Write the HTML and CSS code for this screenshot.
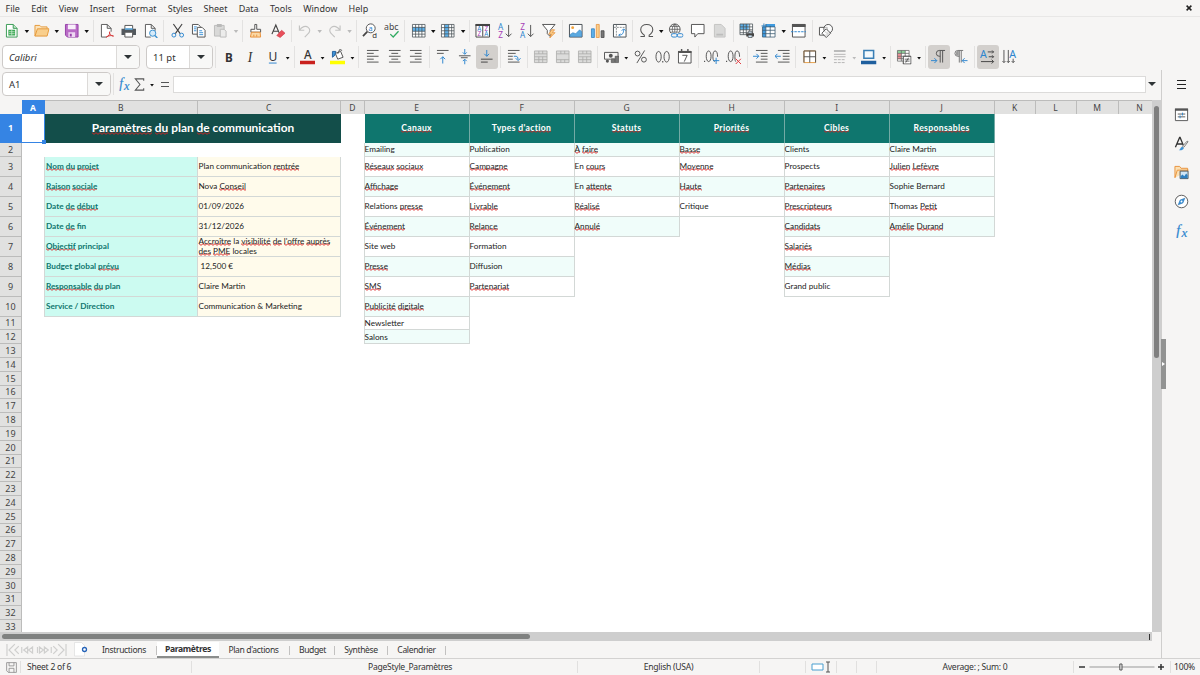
FILE: index.html
```html
<!DOCTYPE html>
<html lang="fr">
<head>
  <meta charset="UTF-8" />
  <title>Plan de communication</title>
  <link rel="stylesheet" href="styles.css">
</head>
<body>

<svg class="defs" aria-hidden="true">
  <!-- standard toolbar -->
  <symbol id="new" viewBox="0 0 16 16"><path d="M2.500 1.500h7l4 4v9h-11z" fill="#fff" stroke="#3a9b55"/><path d="M9.500 1.500v4h4" fill="#bfe5c7" stroke="#3a9b55"/><path d="M4.500 7h7v6h-7z" fill="#39a852"/><path d="M5 9h6M5 11h6M8 7v6" stroke="#d8f0dc" stroke-width=".7"/></symbol>
  <symbol id="open" viewBox="0 0 16 16"><path d="M1 13.500V2.500h5l1.500 1.500h6v2" fill="#fbe3bb" stroke="#e59a3b"/><path d="M1 13.500l2.500-7.500h12l-2 7.500z" fill="#f9cf8d" stroke="#e59a3b"/></symbol>
  <symbol id="save" viewBox="0 0 16 16"><path d="M1.500 1.500h13v13h-11l-2-2z" fill="#b96bc6" stroke="#9640a8"/><path d="M4 1.500h8v5H4z" fill="#f8effa"/><path d="M4.500 9.500h7v5h-7z" fill="#eed7f2"/><path d="M6 11h2v3H6z" fill="#9640a8"/></symbol>
  <symbol id="pdf" viewBox="0 0 16 16"><path d="M8 14.500H2.500v-13h6l4 4V9M8.500 1.500v4h4" fill="#fff" stroke="#5c5c5c"/><path d="M7.500 14.500c3-1 4-4 3.500-5.500-1 2 2 4.500 4 4.500-2-1-5-.5-7.500 1z" fill="none" stroke="#d63a3a"/></symbol>
  <symbol id="print" viewBox="0 0 16 16"><path d="M4 2.500h8v4H4z" fill="#fff" stroke="#555"/><path d="M.5 6h15v6.500H.5z" fill="#52585d"/><path d="M4 9.500h8v5H4z" fill="#fff" stroke="#555"/><path d="M4 5.500h8v1.500H4z" fill="#5fb0e8"/></symbol>
  <symbol id="preview" viewBox="0 0 16 16"><path d="M8 14.500H2.500v-13h6l4 4V8M8.500 1.500v4h4" fill="#fff" stroke="#5c5c5c"/><circle cx="10" cy="10.500" r="3.200" fill="#d6ebfa" stroke="#3a8fce"/><path d="M12.300 13l2.500 2.500" stroke="#3a8fce" stroke-width="1.400"/></symbol>
  <symbol id="cut" viewBox="0 0 16 16"><path d="M3.500 1l7 10M12.500 1l-7 10" stroke="#444" stroke-width="1.200"/><circle cx="4" cy="12.500" r="2" fill="none" stroke="#2e86cf"/><circle cx="12" cy="12.500" r="2" fill="none" stroke="#2e86cf"/></symbol>
  <symbol id="copy" viewBox="0 0 16 16"><path d="M1.500 1.500h6l2 2v8h-8z" fill="#fff" stroke="#555"/><path d="M6.500 4.500h5l3 3v7h-8z" fill="#fff" stroke="#555"/><path d="M3 4h3M3 6h2.500M3 8h2.500M8.500 8h3M8.500 10h4M8.500 12h4" stroke="#3f93d6"/></symbol>
  <symbol id="paste" viewBox="0 0 16 16"><path d="M1.500 2.500h10v11h-10z" fill="#d9d9d8" stroke="#bcbcbb"/><path d="M4 1h5v3H4z" fill="#b9b9b8"/><path d="M7.500 6.500h4l2 2v6h-6z" fill="#ececeb" stroke="#bcbcbb"/></symbol>
  <symbol id="brush" viewBox="0 0 16 16"><path d="M7 1.500h2v5h4v3H3v-3h4z" fill="#fff" stroke="#555"/><path d="M3.500 9.500h9l.5 5H2.500z" fill="#fbd9a6" stroke="#e8913a"/><path d="M6 14v-2M9 14v-2" stroke="#e8913a"/></symbol>
  <symbol id="clear" viewBox="0 0 16 16"><path d="M2 11.500L6 2l4 9.500M3.500 8.500h5" fill="none" stroke="#444" stroke-width="1.200"/><path d="M7 13l5-5.500 3.500 3-5 4.500z" fill="#e8505b" stroke="#cc3340" stroke-width=".6"/></symbol>
  <symbol id="undo" viewBox="0 0 16 16"><path d="M2.500 2.500v5h5M2.500 7.500C5 3.500 9 2.500 11.500 4.500s2 5-.5 7l-3 3" fill="none" stroke="#c3c3c2" stroke-width="1.200"/></symbol>
  <symbol id="redo" viewBox="0 0 16 16"><path d="M13.500 2.500v5h-5M13.500 7.500C11 3.500 7 2.500 4.500 4.500s-2 5 .5 7l3 3" fill="none" stroke="#c3c3c2" stroke-width="1.200"/></symbol>
  <symbol id="find" viewBox="0 0 16 16"><circle cx="9" cy="5.500" r="4.600" fill="#fff" stroke="#555"/><path d="M5.500 9L1 13.500" stroke="#444" stroke-width="1.800"/><text x="6.600" y="8" font-size="7.500" fill="#2e86cf">a</text><text x="10.500" y="15.500" font-size="8" fill="#333">d</text></symbol>
  <symbol id="spell" viewBox="0 0 16 16"><text x="0" y="7.500" font-size="9" textLength="15" fill="#444">abc</text><path d="M6.500 11.500l3 3 5.500-6" fill="none" stroke="#2faa60" stroke-width="1.300"/></symbol>
  <symbol id="row" viewBox="0 0 16 16"><path d="M1.500 1.500h13v13h-13z" fill="#fff"/><path d="M1.500 4.500h13v4h-13z" fill="#5eb1ea"/><path d="M1.500 1.500h13v13h-13zM1.500 4.500h13M1.500 8.500h13M1.500 11.500h13M4.750 1.500v13M8 1.500v13M11.250 1.500v13" fill="none" stroke="#4b5358" stroke-width=".8"/></symbol>
  <symbol id="col" viewBox="0 0 16 16"><path d="M1.500 1.500h13v13h-13z" fill="#fff"/><path d="M4.750 1.500h4.250v13h-4.250z" fill="#5eb1ea"/><path d="M1.500 1.500h13v13h-13zM1.500 4.750h13M1.500 8h13M1.500 11.250h13M4.750 1.500v13M9 1.500v13M12 1.500v13" fill="none" stroke="#4b5358" stroke-width=".8"/></symbol>
  <symbol id="sort" viewBox="0 0 16 16"><path d="M1 1.500h14v13H1zM8 2v12" fill="#fff" stroke="#444"/><path d="M.5 1h15v2H.5z" fill="#444"/><g font-size="6.500"><text x="2.200" y="8.500" fill="#2e86cf">A</text><text x="2.500" y="13.800" fill="#a63fb7">Z</text><text x="9.800" y="8.500" fill="#a63fb7">Z</text><text x="9.500" y="13.800" fill="#2e86cf">A</text></g></symbol>
  <symbol id="az" viewBox="0 0 16 16"><g font-size="8.500"><text x="1" y="7" fill="#2e86cf">A</text><text x="1.200" y="15" fill="#a63fb7">Z</text></g><path d="M12 2v12M9 11l3 3 3-3" fill="none" stroke="#555"/></symbol>
  <symbol id="za" viewBox="0 0 16 16"><g font-size="8.500"><text x="1.200" y="7" fill="#a63fb7">Z</text><text x="1" y="15" fill="#2e86cf">A</text></g><path d="M12 2v12M9 11l3 3 3-3" fill="none" stroke="#555"/></symbol>
  <symbol id="filter" viewBox="0 0 16 16"><path d="M1.500 1.500h13l-5 6v6.500l-3-3V7.500z" fill="#fff" stroke="#555"/><path d="M11 7l-3 4.500h3l-2 4 5.500-5.500h-3L14 7z" fill="#f9cf8d" stroke="#e8913a" stroke-width=".8"/></symbol>
  <symbol id="image" viewBox="0 0 16 16"><path d="M1.500 1.500h13v13h-13z" fill="#fff" stroke="#4b5358"/><circle cx="4.800" cy="4.800" r="1.500" fill="#f2a33c"/><path d="M2 14v-2l3-2 3 1 4-4 2 2v5z" fill="#5aa9e0" stroke="#2e7fc0" stroke-width=".6"/></symbol>
  <symbol id="chart" viewBox="0 0 16 16"><path d="M1.500 6h3v9h-3z" fill="#5eb1ea" stroke="#2e7fc0" stroke-width=".8"/><path d="M6.500 1.500h3v13.500h-3z" fill="#f9cf8d" stroke="#e8913a" stroke-width=".8"/><path d="M11.500 8h3v7h-3z" fill="#777" stroke="#444" stroke-width=".8"/></symbol>
  <symbol id="pivot" viewBox="0 0 16 16"><path d="M1.500 1.500h13v13h-13z" fill="#fff" stroke="#4b5358"/><path d="M2 4.500h12M4.500 2v12" stroke="#8a8f92" stroke-dasharray="2 1"/><path d="M7 12.500c4 0 5-2 5-6M10 8l2-2 2 2M8.500 11L7 12.500 8.500 14" fill="none" stroke="#2e86cf"/></symbol>
  <symbol id="omega" viewBox="0 0 16 16"><path d="M1.500 14h4v-1.500C3 11 1.800 9 1.800 6.800 1.800 3.500 4.500 1.500 8 1.500s6.200 2 6.200 5.300c0 2.200-1.200 4.200-3.700 5.700V14h4" fill="none" stroke="#555" stroke-width="1.100"/></symbol>
  <symbol id="link" viewBox="0 0 16 16"><circle cx="7" cy="6.500" r="5.500" fill="#fff" stroke="#555"/><path d="M1.500 6.500h11M2.500 3.500h9M2.500 9.500h9M7 1v11M7 1C3.500 4 3.500 9 7 12M7 1c3.500 3 3.500 8 0 11" fill="none" stroke="#555" stroke-width=".8"/><path d="M3.500 10h12v5h-12z" fill="#f6f5f4"/><rect x="3.500" y="11" width="6" height="3.500" rx="1.700" fill="none" stroke="#2e86cf"/><rect x="9.500" y="11" width="6" height="3.500" rx="1.700" fill="none" stroke="#2e86cf"/></symbol>
  <symbol id="comment" viewBox="0 0 16 16"><path d="M1.500 1.500h13v9.500H8L5 14.500V11H1.500z" fill="#fff" stroke="#555"/></symbol>
  <symbol id="page" viewBox="0 0 16 16"><path d="M2.500 1.500h7l4 4v9h-11z" fill="#d9d9d8" stroke="#c4c4c3"/><path d="M4.500 11h7v2h-7z" fill="#bdbdbc"/></symbol>
  <symbol id="parea" viewBox="0 0 16 16"><path d="M1 1h13v11H1z" fill="#fff"/><path d="M1 1h9v6H1z" fill="#5eb1ea"/><path d="M1 1h13v11H1zM1 4h13M1 7h13M1 10h13M4.500 1v11M7.500 1v11M11 1v11" fill="none" stroke="#4b5358" stroke-width=".8"/><path d="M7.500 10.500h8v3.500h-8z" fill="#444"/><path d="M9.500 8.500h4v2h-4zM9.500 12.500h4V15h-4z" fill="#cfe6f7" stroke="#444" stroke-width=".7"/></symbol>
  <symbol id="freeze" viewBox="0 0 16 16"><path d="M1.500 3.500h13v11h-13z" fill="#fff"/><path d="M1.500 3.500h3.500v11H1.500zM5 1h9.500v3H5z" fill="#3f9be0"/><path d="M1.500 4h13v10.500h-13zM1.500 7.500h13M1.500 11h13M5 1v13.500M9.500 3v11.500" fill="none" stroke="#3c5a70" stroke-width=".8"/><path d="M3 .5v5M.5 3h5" stroke="#2e7fc0"/></symbol>
  <symbol id="split" viewBox="0 0 16 16"><path d="M1.500 1.500h13v13h-13z" fill="#fff" stroke="#555"/><path d="M1 1h14v3H1z" fill="#555"/><path d="M0 9h16" stroke="#2e86cf" stroke-dasharray="2.500 1"/></symbol>
  <symbol id="shapes" viewBox="0 0 16 16"><path d="M1.500 4.500h8v8h-8z" fill="#fff" stroke="#555"/><circle cx="10.500" cy="6" r="4.500" fill="#fff" fill-opacity=".6" stroke="#555"/><path d="M8.500 6l4.500 4.500-4.500 4.500L4 10.500z" fill="#fff" fill-opacity=".7" stroke="#555"/></symbol>
  <!-- formatting toolbar -->
  <symbol id="bold" viewBox="0 0 16 16"><text x="4" y="13" font-size="13.500" font-weight="700" fill="#333" textLength="8" lengthAdjust="spacingAndGlyphs">B</text></symbol>
  <symbol id="italic" viewBox="0 0 16 16"><text x="5" y="13" font-size="14" class="serif" font-style="italic" fill="#333">I</text></symbol>
  <symbol id="under" viewBox="0 0 16 16"><text x="3.500" y="12" font-size="12.500" fill="#333">U</text><path d="M4 14.500h8" stroke="#2e86cf"/></symbol>
  <symbol id="fcolor" viewBox="0 0 16 16"><text x="4" y="10.500" font-size="12" font-weight="500" fill="#333">A</text><path d="M0 12h16v4H0z" fill="#c9211e"/></symbol>
  <symbol id="fill" viewBox="0 0 16 16"><path d="M5.500 4.500l5.500-2 2.500 6-5.500 2z" fill="#fff" stroke="#555"/><path d="M8 5l2-4.500 2.500 1" fill="none" stroke="#555"/><path d="M6 2.500H2.500v6L5 6.500z" fill="#3f93d6" stroke="#2563a0"/><path d="M0 12h16v4H0z" fill="#ff0"/></symbol>
  <symbol id="left" viewBox="0 0 16 16"><path d="M2 1.500h12M2 4.500h7M2 7.500h12M2 10.500h7M2 13.500h12" stroke="#555"/></symbol>
  <symbol id="center" viewBox="0 0 16 16"><path d="M2 1.500h12M4.500 4.500h7M2 7.500h12M4.500 10.500h7M2 13.500h12" stroke="#555"/></symbol>
  <symbol id="right" viewBox="0 0 16 16"><path d="M2 1.500h12M7 4.500h7M2 7.500h12M7 10.500h7M2 13.500h12" stroke="#555"/></symbol>
  <symbol id="top" viewBox="0 0 16 16"><path d="M2 1.500h12M2 4.500h7" stroke="#555"/><path d="M8 15V8M5.500 10.500L8 8l2.500 2.500" fill="none" stroke="#2e86cf"/></symbol>
  <symbol id="middle" viewBox="0 0 16 16"><path d="M2 7h12M4 9h7" stroke="#555"/><path d="M8 0v5M6 3.500l2 2 2-2M8 16v-5M6 12.500l2-2 2 2" fill="none" stroke="#2e86cf"/></symbol>
  <symbol id="bottom" viewBox="0 0 16 16"><path d="M2 10.500h12M2 13.500h7" stroke="#444"/><path d="M8 1v6.500M5.500 5L8 7.500 10.500 5" fill="none" stroke="#2e86cf"/></symbol>
  <symbol id="wrap" viewBox="0 0 16 16"><path d="M2 1.500h12M2 4.500h8M2 7.500h5M2 10.500h5M2 13.500h12" stroke="#555"/><path d="M8 7.500h2.500q2 0 2 3.500M10 9.500l2.500 2.500L15 9.500" fill="none" stroke="#2e86cf"/></symbol>
  <symbol id="merge" viewBox="0 0 16 16"><path d="M1.500 2h13v12h-13z" fill="#dcdcdb"/><path d="M1.500 2h13v12h-13zM1.500 5h13M1.500 8h13M1.500 11h13M6 2v3M10 2v3M6 8v6M10 8v6" fill="none" stroke="#a9a9a8" stroke-width=".8"/></symbol>
  <symbol id="merge2" viewBox="0 0 16 16"><path d="M1.500 2h13v12h-13z" fill="#dcdcdb"/><path d="M1.500 2h13v12h-13zM1.500 5h13M1.500 11h13M6 2v3M10 2v3M6 11v3M10 11v3" fill="none" stroke="#a9a9a8" stroke-width=".8"/></symbol>
  <symbol id="money" viewBox="0 0 16 16"><path d="M.5 3.500h14v5M.5 3.500v7H7" fill="none" stroke="#555"/><circle cx="7" cy="7" r="2" fill="#555"/><path d="M7.500 10h3.500v4H7.500zM11.500 7.500H15V14h-3.500z" fill="#777" stroke="#444" stroke-width=".6"/><circle cx="3.500" cy="12.500" r="1.600" fill="#555"/></symbol>
  <symbol id="percent" viewBox="0 0 16 16"><circle cx="4.700" cy="4.700" r="2.500" fill="none" stroke="#555"/><circle cx="11.300" cy="11" r="2.500" fill="none" stroke="#555"/><path d="M12 1.500L4 14.500" stroke="#555"/></symbol>
  <symbol id="number" viewBox="0 0 16 16"><ellipse cx="3.700" cy="8" rx="2.700" ry="5.500" fill="none" stroke="#555"/><ellipse cx="12" cy="8" rx="2.700" ry="5.500" fill="none" stroke="#555"/><path d="M7.400 12.500h1.200v1.500H7.400z" fill="#555"/></symbol>
  <symbol id="date" viewBox="0 0 16 16"><path d="M1.500 2.500h13v12h-13z" fill="#fff" stroke="#555"/><path d="M1 2h14v2.200H1zM4 0h1.500v3H4zM10.500 0H12v3h-1.500z" fill="#555"/><path d="M5.500 6.500h5L7.500 13" fill="none" stroke="#555"/></symbol>
  <symbol id="decadd" viewBox="0 0 16 16"><path d="M0 12h1.200v1.500H0z" fill="#555"/><ellipse cx="4.800" cy="7.500" rx="2.500" ry="5.500" fill="none" stroke="#555"/><path d="M11 13c-1.500-.3-1.800-3-1.800-5.500C9.200 4 10 2 11.500 2S14 4 14 8" fill="none" stroke="#555"/><path d="M12.500 9v6.500M9.500 12h6.500" stroke="#2e86cf"/></symbol>
  <symbol id="decdel" viewBox="0 0 16 16"><path d="M0 12h1.200v1.500H0z" fill="#555"/><ellipse cx="4.800" cy="7.500" rx="2.500" ry="5.500" fill="none" stroke="#555"/><path d="M10 13c-.7-1-.8-3-.8-5.500C9.200 4 10 2 11.500 2S14 4 14 8" fill="none" stroke="#555"/><path d="M10 10l5.500 5.500M15.500 10L10 15.500" stroke="#e0393e"/></symbol>
  <symbol id="indent" viewBox="0 0 16 16"><path d="M3 1.500h12M8 4.500h7M8 7.500h7M8 10.500h7M3 13.500h12" stroke="#555"/><path d="M0 7.500h6M3.500 5L6 7.500 3.500 10" fill="none" stroke="#2e86cf"/></symbol>
  <symbol id="outdent" viewBox="0 0 16 16"><path d="M3 1.500h12M8 4.500h7M8 7.500h7M8 10.500h7M3 13.500h12" stroke="#555"/><path d="M0 7.500h6M2.500 5L0 7.500 2.500 10" fill="none" stroke="#2e86cf"/></symbol>
  <symbol id="borders" viewBox="0 0 16 16"><path d="M2 2h12v12H2z" fill="#fff" stroke="#e8a04a"/><path d="M2 14V2h12v12M8 2v12M2 8h12" fill="none" stroke="#555"/></symbol>
  <symbol id="bstyle" viewBox="0 0 16 16"><path d="M2 2h12" stroke="#bbb" stroke-width="2"/><path d="M2 5.500h12M2 8h12" stroke="#b5b5b5"/><path d="M2 11h12M2 14h12" stroke="#b5b5b5" stroke-dasharray="3 1"/></symbol>
  <symbol id="bcolor" viewBox="0 0 16 16"><path d="M3 1.500h10v8H3z" fill="#f4fafe" stroke="#3a7fb5" stroke-width="1.600"/><path d="M0 12h16v4H0z" fill="#1f5f9e"/></symbol>
  <symbol id="cond" viewBox="0 0 16 16"><path d="M1.500 1.500h12v11h-12z" fill="#fff"/><path d="M1.500 1.500h8v3h-8z" fill="#8fd19b"/><path d="M1.500 4.500h4v6h-4z" fill="#ef9096"/><path d="M1.500 1.500h12v11h-12zM1.500 4.500h12M1.500 7.500h12M1.500 10h12M5.500 1.500v11M9.500 1.500v11" fill="none" stroke="#666" stroke-width=".8"/><path d="M7.500 7.500h8v8h-8z" fill="#fff" stroke="#444"/><path d="M9 10.500h5M9 12.500h5M13 9l-3 5" stroke="#444" stroke-width=".8"/></symbol>
  <symbol id="ltr" viewBox="0 0 16 16"><path d="M9.500 14V1.500M12 14V1.500M14.500 1.500H8.500a3 3 0 0 0 0 6h1" fill="none" stroke="#555"/><path d="M0 12h6M3.500 9.500L6 12l-2.500 2.500" fill="none" stroke="#2e86cf"/></symbol>
  <symbol id="rtl" viewBox="0 0 16 16"><path d="M6.500 14V1.500M8.500 14V1.500M10.500 1.500H5a3 3 0 0 0 0 6h1.500" fill="none" stroke="#777"/><path d="M4 2h2v5H4q-2-2.500 0-5z" fill="#999"/><path d="M15 12h-5.500M12 9.500L9.500 12l2.500 2.500" fill="none" stroke="#2e86cf"/></symbol>
  <symbol id="thoriz" viewBox="0 0 16 16"><text x="0" y="9.500" font-size="11" fill="#2e86cf">A</text><path d="M8 3h6M12.500 1.500L14 3l-1.500 1.500M9 8h5M12.500 6.500L14 8l-1.500 1.500M1 13h13M12 11l2 2-2 2" fill="none" stroke="#444"/></symbol>
  <symbol id="tvert" viewBox="0 0 16 16"><text x="7.500" y="9.500" font-size="11" fill="#2e86cf">A</text><path d="M2 1v13M.5 12.500L2 14l1.500-1.500M6.500 1v13M5 12.500L6.500 14 8 12.500M11.500 10v4M10 12.500l1.500 1.500 1.500-1.500" fill="none" stroke="#555"/></symbol>
  <symbol id="sigma" viewBox="0 0 16 16"><path d="M12.500 4V2H3.500l5 6-5 6h9v-2" fill="none" stroke="#555" stroke-width="1.100"/></symbol>
  <symbol id="func" viewBox="0 0 16 16"><g class="serif" font-style="italic" fill="#2e86cf" stroke="#2e86cf" stroke-width=".2"><text x="2.500" y="12.500" font-size="15.500">f</text><text x="8" y="14.500" font-size="14">x</text></g></symbol>
  <!-- sidebar -->
  <symbol id="props" viewBox="0 0 16 16"><path d="M1.500 2.500h13v12h-13z" fill="#fff" stroke="#555"/><path d="M1 1.500h14v2.500H1z" fill="#555"/><path d="M4 7.500h8M4 10.500h8" stroke="#555"/><path d="M9 6v3M6.500 9v3" stroke="#2e86cf"/></symbol>
  <symbol id="styles" viewBox="0 0 16 16"><path d="M1.500 12L6 1.500h.5L10 10M3 8.500h6" fill="none" stroke="#333" stroke-width="1.400"/><path d="M15 6l-4.500 6-1.500-1 5-5.500z" fill="#fff" stroke="#555" stroke-width=".8"/><path d="M5 15c2 0 1.500-3 4-3.500L10.500 13c-1 2-3 2.500-5.500 2z" fill="#3f93d6"/></symbol>
  <symbol id="gallery" viewBox="0 0 16 16"><path d="M1 13.500v-12h5l1.500 2h7v3M1 13.500L3.500 5.500h12" fill="#fbe0b4" stroke="#e8913a"/><path d="M6.500 6.500h8.500v8H6.500z" fill="#cfe6f7" stroke="#4b5358"/><path d="M7 14v-2l2-2 2 2 2-3 1.500 2v3z" fill="#2e7fc0"/></symbol>
  <symbol id="navi" viewBox="0 0 16 16"><circle cx="8" cy="8" r="6.700" fill="#fff" stroke="#555"/><path d="M11.500 4.500L9.500 9.500l-5 2 2-5z" fill="#3f93d6" stroke="#1f6fb5" stroke-width=".6"/><circle cx="8" cy="8" r="1" fill="#fff"/></symbol>
  <symbol id="disk" viewBox="0 0 16 16"><path d="M2 2h12v12H4l-2-2zM5 2v4h6V2M5 14V9h6v5" fill="none" stroke="#8a8a8a"/></symbol>
</svg>

<div class="app">
  <div class="menubar">
    <span>File</span><span>Edit</span><span>View</span><span>Insert</span><span>Format</span><span>Styles</span><span>Sheet</span><span>Data</span><span>Tools</span><span>Window</span><span>Help</span>
    <svg class="close" viewBox="0 0 6 6"><path d="M.6.6l4.800 4.800M5.400.6L.6 5.400" stroke="#222" stroke-width="1.500"/></svg>
  </div>

  <div class="toolbar" data-icons="new v open v save v | pdf print preview | cut copy paste. v. | brush clear | undo v. redo v. | find spell | row v col v | sort az za filter | image chart pivot | omega v link comment page | parea freeze v split | shapes"></div>

  <div class="format-row">
    <div class="combo font-name"><i>Calibri</i><b></b></div>
    <div class="combo font-size"><span>11 pt</span><b></b></div>
    <div class="toolbar" data-icons="| bold italic under v | fcolor v fill v | left center right | top middle bottom* | wrap | merge merge2 merge | money v percent number date | decadd decdel | indent outdent | borders v bstyle v. bcolor v | cond v | ltr* rtl | thoriz* tvert"></div>
  </div>

  <div class="main">
    <div class="work">
      <div class="formula-row">
        <div class="combo name-box"><span>A1</span><b></b></div>
        <span class="sep"></span>
        <svg class="fx"><use href="#func"/></svg>
        <svg class="sum"><use href="#sigma"/></svg>
        <span class="drop"></span>
        <span class="equals"></span>
        <div class="formula"></div>
        <span class="expand"></span>
      </div>

      <div class="sheet-area">
        <div class="sheet" id="sheet"></div>
        <div class="vscroll"><div class="vthumb"></div></div>
      </div>
      <div class="hscroll"><div class="hthumb"></div><span class="hsplit"></span></div>

      <div class="tabs">
        <svg class="nav" viewBox="0 0 62 14"><path d="M1 1v12M9 1L3 7l6 6M13 3L9 7l4 4M16 4v6M22 4l-4 3 4 3zM27 4l-4 3 4 3zM32 4v6M34 4v6l4-3zM39 4v6l4-3zM46 4v6M48 3l4 4-4 4M53 1l6 6-6 6M61 1v12" fill="none" stroke="#cfcfce" stroke-width="1.200"/></svg>
        <svg class="add" viewBox="0 0 14 15"><path d="M.5.5h7l3 3V14H.5z" fill="#fff" stroke="#ddd" stroke-width=".7"/><circle cx="10.500" cy="7.500" r="2" fill="#fff" stroke="#2563b8" stroke-width="1.300"/></svg>
        <span class="tab t1">Instructions</span>
        <span class="tab t2 active">Paramètres</span>
        <span class="tab t3">Plan d'actions</span>
        <span class="tab t4">Budget</span>
        <span class="tab t5">Synthèse</span>
        <span class="tab t6">Calendrier</span>
      </div>
    </div>

    <div class="sidebar">
      <div class="burger"></div>
      <svg><use href="#props"/></svg>
      <svg><use href="#styles"/></svg>
      <svg><use href="#gallery"/></svg>
      <svg><use href="#navi"/></svg>
      <svg><use href="#func"/></svg>
      <div class="handle"></div>
    </div>
  </div>

  <div class="status">
    <span class="s-save"><svg><use href="#disk"/></svg></span>
    <span class="s-sheet">Sheet 2 of 6</span>
    <span class="s-style">PageStyle_Paramètres</span>
    <span class="s-lang">English (USA)</span>
    <span class="s-ins"></span>
    <span class="s-sel"><svg viewBox="0 0 20 12"><path d="M1 3h11v6H1z" fill="#fff" stroke="#4a9fd0"/><path d="M15 1h4M17 1v10M15 11h4" stroke="#555" fill="none"/></svg></span>
    <span class="s-gap"></span>
    <span class="s-gap"></span>
    <span class="s-sum">Average: ; Sum: 0</span>
    <span class="s-zoom"><svg viewBox="0 0 88 12"><path d="M1 6h6M80 6h6M83 3v6" stroke="#333" stroke-width="1.500"/><path d="M11.500 6h65" stroke="#999"/><path d="M41.800 3h2.200v6h-2.200z" fill="#eee" stroke="#555"/></svg></span>
    <span class="s-pct">100%</span>
  </div>
</div>

<script>
// toolbars: "v" is a dropdown arrow, "|" a separator, "." disabled, "*" pressed
document.querySelectorAll('.toolbar').forEach(bar => {
  bar.innerHTML = bar.dataset.icons.split(' ').map(name => {
    if (name === '|') return '<span class="sep"></span>';
    if (name[0] === 'v') return `<span class="drop${name[1] ? ' off' : ''}"></span>`;
    const pressed = name.endsWith('*') ? ' pressed' : '';
    return `<span class="tool${pressed}"><svg><use href="#${name.replace(/[.*]/, '')}"/></svg></span>`;
  }).join('');
});

// words in [brackets] get the spellcheck underline
const params = [
  ['[Nom] [du] [projet]', 'Plan communication [rentrée]'],
  ['[Raison] [sociale]', 'Nova [Conseil]'],
  ['Date [de] [début]', '01/09/2026'],
  ['Date [de] fin', '31/12/2026'],
  ['[Objectif] principal', '[Accroître] la [visibilité] [de] [l\'offre] [auprès]<br>[des] [PME] locales'],
  ['Budget global [prévu]', '&nbsp;12,500 €'],
  ['[Responsable] [du] plan', 'Claire Martin'],
  ['Service / Direction', 'Communication &amp; Marketing']
];

const lists = {
  E: ['[Canaux]', 'Emailing', '[Réseaux] [sociaux]', '[Affichage]', 'Relations [presse]', '[Événement]', 'Site web', '[Presse]', '[SMS]', '[Publicité] [digitale]', 'Newsletter', 'Salons'],
  F: ['Types [d\'action]', 'Publication', '[Campagne]', '[Événement]', '[Livrable]', '[Relance]', 'Formation', 'Diffusion', '[Partenariat]'],
  G: ['[Statuts]', '[À] [faire]', 'En [cours]', 'En [attente]', '[Réalisé]', '[Annulé]'],
  H: ['[Priorités]', '[Basse]', '[Moyenne]', '[Haute]', 'Critique'],
  I: ['[Cibles]', 'Clients', 'Prospects', '[Partenaires]', '[Prescripteurs]', '[Candidats]', '[Salariés]', '[Médias]', 'Grand public'],
  J: ['[Responsables]', 'Claire Martin', '[Julien] [Lefèvre]', 'Sophie Bernard', 'Thomas [Petit]', '[Amélie] [Durand]']
};

const spell = t => t.replace(/\[(.+?)\]/g, '<u>$1</u>');
const cols = 'ABCDEFGHIJKLMN'.split('');
let html = '<div class="corner"></div>' + cols.map(c => `<div class="head${c === 'A' ? ' on' : ''}">${c}</div>`).join('');

for (let r = 1; r <= 33; r++) {
  html += `<div class="head rowhead${r === 1 ? ' on' : ''}">${r}</div>`;
  cols.forEach(c => {
    const p = params[r - 3];
    const list = lists[c];
    if (r === 1 && c === 'A') html += '<div class="cell cursor"></div>';
    else if (r === 1 && c === 'B') html += `<div class="cell title"><span>${spell('[Paramètres] [du] plan [de] communication')}</span></div>`;
    else if (r === 1 && c === 'C') return;
    else if (p && c === 'B') html += `<div class="cell key"><span>${spell(p[0])}</span></div>`;
    else if (p && c === 'C') html += `<div class="cell val"><span>${spell(p[1])}</span></div>`;
    else if (list && list[r - 1]) {
      const kind = r === 1 ? 'th' : r % 2 ? 'item' : 'item even';
      html += `<div class="cell ${kind}"><span>${spell(list[r - 1])}</span></div>`;
    }
    else html += '<div class="cell"></div>';
  });
}
document.getElementById('sheet').innerHTML = html;
</script>

</body>
</html>
```
FILE: styles.css
```css
* {
  box-sizing: border-box;
}
html, body {
  margin: 0;
  padding: 0;
  height: 100%;
  overflow: hidden;
}
body {
  font-family: "Noto Sans", sans-serif;
  font-size: 9px;
  color: #333;
  background: #f6f5f4;
}
.defs {
  display: none;
}
.serif {
  font-family: "Liberation Serif", serif;
}
.app {
  display: flex;
  flex-direction: column;
  width: 1200px;
  height: 675px;
}

/* menu */
.menubar {
  display: flex;
  align-items: center;
  height: 17px;
  padding: 0 8px 0 5.500px;
  gap: 11.300px;
  border-bottom: 1px solid #e8e7e6;
  font-size: 9px;
}
.close {
  width: 6px;
  height: 6px;
  margin-left: auto;
}

/* toolbars */
.toolbar {
  display: flex;
  align-items: center;
  height: 27px;
  padding-left: 1px;
}
.tool {
  display: flex;
  align-items: center;
  justify-content: center;
  width: 21.900px;
  height: 24px;
  border-radius: 3px;
}
.tool svg {
  width: 15.500px;
  height: 15.500px;
}
.pressed {
  background: #d3d0cd;
}
.sep {
  width: 1px;
  height: 22px;
  margin: 0 2px;
  background: #e3e2e1;
}
.drop {
  width: 8px;
  height: 3px;
  margin-top: 2px;
  background: #111;
  clip-path: polygon(22% 0, 78% 0, 50% 100%);
}
.drop.off {
  background: #bbb;
}
.format-row {
  display: flex;
  align-items: center;
  height: 26px;
  padding-left: 2px;
}
.format-row .toolbar {
  padding-left: 0;
}
.combo {
  display: flex;
  align-items: center;
  height: 24px;
  padding-left: 6px;
  border: 1px solid #cdcac8;
  border-radius: 4px;
  background: #fff;
  font-size: 9.500px;
}
.combo b {
  display: flex;
  align-items: center;
  justify-content: center;
  height: 100%;
  width: 23px;
  margin-left: auto;
  border-left: 1px solid #dcdad8;
  border-radius: 0 4px 4px 0;
  background: #f8f8f7;
}
.combo b::before, .expand {
  content: "";
  width: 8px;
  height: 4px;
  background: #2e3436;
  clip-path: polygon(0 0, 100% 0, 50% 100%);
}
.font-name {
  width: 138px;
  margin-right: 6px;
}
.font-size {
  width: 67px;
}

/* formula bar */
.main {
  display: flex;
  height: 588px;
}
.work {
  display: flex;
  flex-direction: column;
  width: 1161px;
}
.formula-row {
  display: flex;
  align-items: center;
  height: 30px;
  padding: 0 5px 2px 2px;
}
.name-box {
  width: 109px;
}
.formula-row .fx {
  width: 14px;
  height: 14px;
  margin-left: 1px;
}
.formula-row .sum {
  width: 15px;
  height: 15px;
  margin: 0 1px;
}
.equals {
  width: 8px;
  height: 5px;
  margin: 0 4px 0 5px;
  border-top: 1.500px solid #555;
  border-bottom: 1.500px solid #555;
}
.formula {
  flex: 1;
  height: 17px;
  border: 1px solid #dcdbda;
  background: #fff;
}
.expand {
  margin-left: 2px;
}

/* sheet */
.sheet-area {
  display: flex;
  height: 532px;
  overflow: hidden;
}
.sheet {
  display: grid;
  width: 1152px;
  height: 532px;
  overflow: hidden;
  grid-template-columns: 22px 23px 152.500px 143.500px 23.600px repeat(5, 105px) 105px 41px 41px 42px 42.900px;
  grid-template-rows: 14.200px 28.400px 14px repeat(8, 20px) 13.800px;
  grid-auto-rows: 13.800px;
  background: #fff;
  font-family: Lato, sans-serif;
  font-size: 8.200px;
  color: #1c1c1c;
}
.corner {
  background: #f6f5f4;
}
.head {
  display: flex;
  align-items: center;
  justify-content: center;
  border-right: 1px solid #bcbcbb;
  border-top: 1px solid #bcbcbb;
  background: #e1e1e0;
  font-family: "Noto Sans", sans-serif;
  font-size: 8.500px;
  line-height: 11px;
  color: #444;
}
.rowhead {
  border-top: 0;
  border-bottom: 1px solid #bcbcbb;
  font-size: 9px;
}
.head.on {
  border-color: #3584e4;
  background: #3584e4;
  color: #fff;
  font-weight: 700;
}
.cell {
  display: flex;
  align-items: center;
  min-width: 0;
  line-height: 9.500px;
  white-space: nowrap;
}
.cell u {
  text-decoration: none;
  background: url("data:image/svg+xml,%3Csvg xmlns='http://www.w3.org/2000/svg' width='4' height='3'%3E%3Cpath d='M-1 1.500L0 .7 2 2.300 4 .7 5 1.500' fill='none' stroke='%23d82020' stroke-width='.9'/%3E%3C/svg%3E") repeat-x left bottom;
}
.cursor {
  position: relative;
  border-right: 1px solid #3584e4;
  border-bottom: 1px solid #3584e4;
}
.cursor::after {
  content: "";
  position: absolute;
  right: -2px;
  bottom: -2px;
  width: 4px;
  height: 4px;
  background: #3584e4;
}
.title {
  grid-column: span 2;
  justify-content: center;
  background: #134e4a;
  color: #fff;
  font-size: 11.900px;
  line-height: 14px;
  font-weight: 700;
}
.th {
  justify-content: center;
  border-right: 1px solid #73aaa5;
  background: #0f766e;
  color: #fff;
  font-size: 8.600px;
  font-weight: 700;
  letter-spacing: 0.350px;
}
.key, .val, .item {
  padding: 1px 0 0 1px;
  border-right: 1px solid #d3d8d6;
  border-bottom: 1px solid #d3d8d6;
  box-shadow: -1px 0 #d3d8d6;
}
.item {
  padding-left: 0;
}
.key {
  background: #ccfbf1;
  color: #0f766e;
  font-weight: 700;
}
.val {
  background: #fffbeb;
}
.even {
  background: #f0fdfa;
}

/* scrollbars */
.vscroll {
  width: 9px;
  padding: 6px 2px;
  background: #cecece;
}
.vthumb {
  width: 5px;
  height: 252px;
  border-radius: 3px;
  background: #7f7f7f;
}
.hscroll {
  display: flex;
  align-items: center;
  width: 1152px;
  height: 9px;
  padding-left: 2px;
  background: #cecece;
}
.hthumb {
  width: 528px;
  height: 5px;
  border-radius: 3px;
  background: #7f8180;
}
.hsplit {
  width: 1px;
  height: 6px;
  margin: 0 2px 0 auto;
  background: #333;
}

/* sheet tabs */
.tabs {
  display: flex;
  align-items: center;
  height: 17px;
}
.nav {
  width: 61px;
  height: 14px;
  margin-left: 6px;
}
.add {
  width: 14px;
  height: 15px;
  margin: 0 0 0 7px;
}
.tab {
  position: relative;
  display: flex;
  align-items: center;
  justify-content: center;
  height: 16px;
  font-size: 8.600px;
  letter-spacing: -0.380px;
}
.tab::after {
  content: "";
  position: absolute;
  right: 0;
  top: 4px;
  width: 1px;
  height: 9px;
  background: #c2c1c0;
}
.t1 { width: 69px; padding-left: 3px; }
.t2 { width: 62px; }
.t3 { width: 71px; padding-right: 2px; }
.t4 { width: 45px; }
.t5 { width: 53px; padding-right: 1px; }
.t6 { width: 58px; padding-right: 1px; }
.tab.active {
  border-bottom: 2px solid #8b8d8c;
  background: #fff;
  font-weight: 700;
}
.tab.active::after {
  display: none;
}

/* sidebar */
.sidebar {
  position: relative;
  display: flex;
  flex-direction: column;
  align-items: center;
  width: 39px;
  padding: 10px 0 0 1px;
  border-left: 1px solid #cfcecd;
}
.sidebar svg {
  width: 15px;
  height: 15px;
  margin-bottom: 14px;
}
.burger {
  width: 9px;
  height: 9px;
  margin-bottom: 18px;
  border-top: 1.500px solid #222;
  border-bottom: 1.500px solid #222;
  background: linear-gradient(#222, #222) center / 100% 1px no-repeat;
}
.handle {
  position: absolute;
  left: -1px;
  top: 269px;
  width: 5px;
  height: 50px;
  background: #929392;
}
.handle::after {
  content: "";
  position: absolute;
  left: 1px;
  top: 23px;
  border-left: 3px solid #fff;
  border-top: 2px solid transparent;
  border-bottom: 2px solid transparent;
}

/* status bar */
.status {
  display: flex;
  align-items: center;
  height: 17px;
  border-top: 1px solid #d3d2d1;
  font-size: 8.600px;
  letter-spacing: -0.280px;
}
.status span {
  display: flex;
  align-items: center;
  justify-content: center;
  height: 12px;
  border-right: 1px solid #e1e0df;
}
.s-save { width: 21px; padding-left: 3px; }
.s-save svg { width: 13px; height: 13px; }
.status .s-sheet { width: 171px; padding-left: 6px; justify-content: flex-start; }
.status .s-style { width: 386px; padding-left: 176px; justify-content: flex-start; }
.s-lang { width: 182px; }
.s-ins { width: 46px; }
.s-sel { width: 31px; }
.s-sel svg { width: 20px; height: 12px; }
.s-gap { width: 20px; }
.s-sum { width: 197px; }
.s-zoom { width: 97px; }
.s-zoom svg { width: 88px; height: 12px; }
.status .s-pct { flex: 1; border: 0; padding-right: 2px; }
```
